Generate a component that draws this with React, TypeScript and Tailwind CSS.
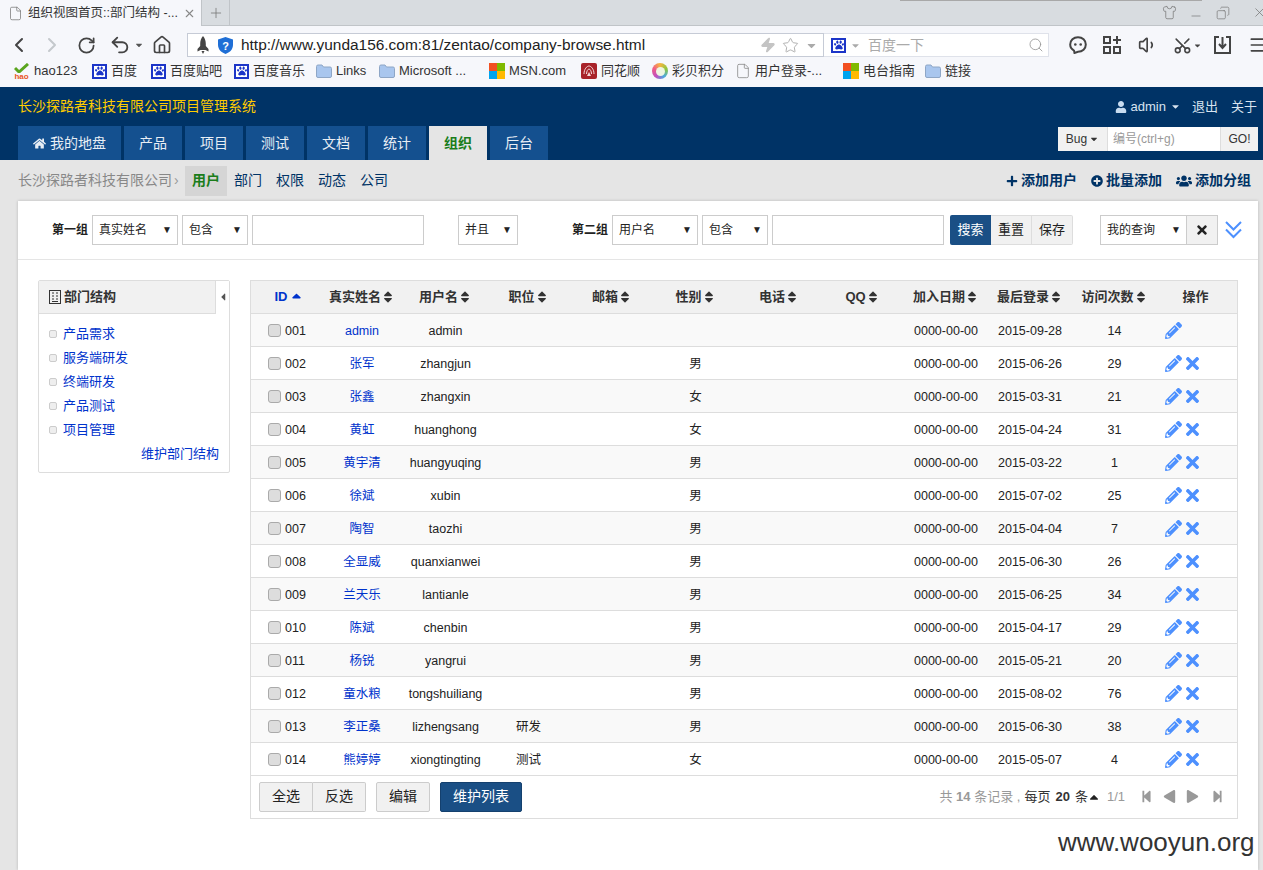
import {
  FaCaretDown,
  FaCaretLeft,
  FaCaretUp,
  FaHome,
  FaPaw,
  FaPencilAlt,
  FaPlus,
  FaPlusCircle,
  FaSort,
  FaSortUp,
  FaStepBackward,
  FaStepForward,
  FaTimes,
  FaUser,
  FaUsers,
  FaPlay,
} from "react-icons/fa";
import { ChevronLeft, ChevronRight, RotateCw, Undo2, Home, Zap, Star, Search, X, Plus, Minus, Copy, Shirt, Volume1, Scissors, Menu, File } from "lucide-react";

const Folder = () => (
  <svg width="16" height="14" viewBox="0 0 16 14" className="shrink-0">
    <path d="M0.5 2.5 Q0.5 1 2 1 H6 L7.5 3 H14 Q15.5 3 15.5 4.5 V12 Q15.5 13.5 14 13.5 H2 Q0.5 13.5 0.5 12 Z" fill="#a9c6ee" stroke="#8ea6c6" />
  </svg>
);

const Paw = () => (
  <span className="flex h-[15px] w-[15px] shrink-0 items-center justify-center border-2 border-[#1c35c8] bg-white text-[#1c35c8]">
    <FaPaw size={10} />
  </span>
);

const MsLogo = () => (
  <span className="grid h-[16px] w-[16px] shrink-0 grid-cols-2">
    <span className="bg-[#f25022]" />
    <span className="bg-[#7fba00]" />
    <span className="bg-[#00a4ef]" />
    <span className="bg-[#ffb900]" />
  </span>
);

const Hao = () => (
  <span className="flex h-[17px] w-[17px] shrink-0 flex-col items-center">
    <svg width="15" height="10" viewBox="0 0 15 10" className="shrink-0">
      <path d="M1 5 L5 9 L14 1" fill="none" stroke="#5aa51e" strokeWidth="3" />
    </svg>
    <span className="text-[8px] font-bold leading-[7px] text-[#e8541c]">hao</span>
  </span>
);

const Tonghuashun = () => (
  <svg width="16" height="16" viewBox="0 0 16 16" className="shrink-0">
    <rect width="16" height="16" rx="2" fill="#a8232a" />
    <path d="M3 11 C3 6 6 3 8 3 C10 3 13 6 13 11 M5.5 11 C5.5 8 7 6 8 6 C9 6 10.5 8 10.5 11" fill="none" stroke="#f3d9d9" strokeWidth="1" />
    <path d="M8 9 L10 13 H6 Z" fill="#f3d9d9" />
  </svg>
);

const Caibei = () => (
  <span className="flex h-[16px] w-[16px] shrink-0 items-center justify-center rounded-full bg-[conic-gradient(#f5b63f,#8cc63f,#4aa8e0,#c04fc0,#ef5a8a,#f5b63f)]">
    <span className="h-[9px] w-[9px] rounded-full bg-[#eef5e0]" />
  </span>
);

const bookmarks = [
  { w: "w-[79px]", label: "hao123", icon: <Hao /> },
  { w: "w-[59px]", label: "百度", icon: <Paw /> },
  { w: "w-[83px]", label: "百度贴吧", icon: <Paw /> },
  { w: "w-[82px]", label: "百度音乐", icon: <Paw /> },
  { w: "w-[63px]", label: "Links", icon: <Folder /> },
  { w: "w-[110px]", label: "Microsoft ...", icon: <Folder /> },
  { w: "w-[92px]", label: "MSN.com", icon: <MsLogo /> },
  { w: "w-[71px]", label: "同花顺", icon: <Tonghuashun /> },
  { w: "w-[83px]", label: "彩贝积分", icon: <Caibei /> },
  { w: "w-[108px]", label: "用户登录-...", icon: <File size={16} strokeWidth={1.2} color="#888" className="shrink-0" /> },
  { w: "w-[82px]", label: "电台指南", icon: <MsLogo /> },
  { w: "w-[60px]", label: "链接", icon: <Folder /> },
];

const BrowserChrome = () => (
  <div className="relative h-[87px] shrink-0 bg-[#f6f7fb] text-[#333]">
    <div className="absolute left-[900px] top-0 h-px w-[302px] bg-[#a8a8a8]" />
    {/* tab strip */}
    <div className="flex h-[26px] items-stretch border-b border-[#c0c4c8] bg-[#d8dce0]">
      <div className="-mb-px flex w-[202px] items-center border-r border-[#c0c4c8] bg-[#f6f7fb] pl-[8px] text-[12.5px]">
        <File size={15} strokeWidth={1.2} color="#777" className="shrink-0" />
        <span className="ml-[5px] w-[155px] shrink-0 whitespace-nowrap">组织视图首页::部门结构 -...</span>
        <X size={13} color="#888" className="shrink-0" />
      </div>
      <div className="flex w-[28px] items-center justify-center border-r border-[#c0c4c8]">
        <Plus size={16} strokeWidth={1.2} color="#777" />
      </div>
      <div className="ml-auto mr-[-4px] flex items-center gap-[12px] text-[#777]">
        <Shirt size={15} strokeWidth={1.2} />
        <Minus size={14} strokeWidth={1.2} className="mt-[7px]" />
        <Copy size={14} strokeWidth={1.2} className="ml-[1px] scale-x-[-1]" />
        <X size={15} strokeWidth={1.2} className="ml-[10px]" />
      </div>
    </div>
    {/* toolbar */}
    <div className="flex h-[34px] items-center pl-[7px] pt-[4px]">
      <ChevronLeft size={24} strokeWidth={2} color="#444" className="shrink-0" />
      <ChevronRight size={24} strokeWidth={2} color="#c4c8cc" className="ml-[9px] shrink-0" />
      <RotateCw size={19} strokeWidth={2.2} color="#444" className="ml-[13px] shrink-0" />
      <Undo2 size={22} strokeWidth={2} color="#444" className="ml-[13px] shrink-0" />
      <FaCaretDown size={10} color="#555" className="ml-[3px] shrink-0" />
      <Home size={20} strokeWidth={2} color="#444" className="ml-[8px] shrink-0" />
      <div className="ml-[15px] flex h-[24px] w-[637px] shrink-0 items-center border border-[#c6cbd6] bg-white pl-[8px]">
        <svg width="14" height="18" viewBox="0 0 14 18" className="shrink-0">
          <path d="M7 0 C9 2 9.8 5 9.8 8 V10 L12.5 13 V15.5 L9.5 14 H4.5 L1.5 15.5 V13 L4.2 10 V8 C4.2 5 5 2 7 0 Z M5.5 15 H8.5 L7 18 Z" fill="#444" />
        </svg>
        <svg width="15" height="17" viewBox="0 0 15 17" className="ml-[8px] shrink-0">
          <path d="M7.5 0 L15 2.5 V8 C15 12.5 11.5 15.5 7.5 17 C3.5 15.5 0 12.5 0 8 V2.5 Z" fill="#1f6fd6" />
          <text x="7.5" y="12.5" textAnchor="middle" fontSize="11" fontWeight="700" fill="#fff">?</text>
        </svg>
        <span className="ml-[8px] w-[519px] shrink-0 whitespace-nowrap text-[15.45px] leading-[22px] text-[#222]">http://www.yunda156.com:81/zentao/company-browse.html</span>
        <Zap size={16} fill="#c4c4c4" color="#c4c4c4" className="shrink-0" />
        <Star size={17} strokeWidth={1.3} color="#aaa" className="ml-[6px] shrink-0" />
        <FaCaretDown size={13} color="#aaa" className="ml-[6px] shrink-0" />
      </div>
      <div className="flex h-[24px] w-[225px] shrink-0 items-center border border-l-0 border-[#dfe2ea] bg-white pl-[7px]">
        <Paw />
        <FaCaretDown size={11} color="#aaa" className="ml-[4px]" />
        <span className="ml-[7px] text-[14px] text-[#aaa]">百度一下</span>
        <Search size={16} strokeWidth={1.3} color="#999" className="ml-auto mr-[4px]" />
      </div>
      <div className="ml-[20px] flex items-center gap-[15px] text-[#444]">
        <svg width="18" height="18" viewBox="0 0 18 18" className="shrink-0">
          <path d="M9 1.2 C13.5 1.2 16.8 4.4 16.8 8.6 C16.8 12.8 13.5 15.8 9 15.8 L5.5 17 L5 14.6 C2.7 13.3 1.2 11.2 1.2 8.6 C1.2 4.4 4.5 1.2 9 1.2 Z" fill="none" stroke="#444" strokeWidth="2" />
          <circle cx="6.3" cy="8.5" r="1.3" fill="#444" />
          <circle cx="11.7" cy="8.5" r="1.3" fill="#444" />
        </svg>
        <svg width="18" height="18" viewBox="0 0 18 18" className="ml-[1px] shrink-0" fill="none" stroke="#444" strokeWidth="2">
          <rect x="1" y="1" width="6" height="6" />
          <rect x="1" y="11" width="6" height="6" />
          <rect x="11" y="11" width="6" height="6" />
          <path d="M10 4 H18 M14 0 V8" />
        </svg>
        <Volume1 size={20} strokeWidth={2} className="ml-[2px] shrink-0" />
        <Scissors size={19} strokeWidth={2} className="shrink-0 -rotate-90" />
        <FaCaretDown size={9} className="-ml-[14px] shrink-0" />
        <svg width="17" height="18" viewBox="0 0 17 18" className="-ml-[3px] shrink-0" fill="none" stroke="#444" strokeWidth="2">
          <path d="M5 1 H1 V17 H16 V1 H12 M8.5 1 V11 M5 8 L8.5 12 L12 8" />
        </svg>
        <Menu size={20} strokeWidth={2} className="ml-[2px] shrink-0" />
      </div>
    </div>
    {/* favourites */}
    <div className="flex h-[27px] items-center pb-[5px] pl-[13px] text-[13px]">
      {bookmarks.map((b) => (
        <div key={b.label} className={`flex shrink-0 items-center gap-[4px] whitespace-nowrap ${b.w}`}>
          {b.icon}
          <span>{b.label}</span>
        </div>
      ))}
    </div>
  </div>
);

const navTabs = ["产品", "项目", "测试", "文档", "统计", "组织", "后台"];

const Header = () => (
  <div className="h-[73px] shrink-0 bg-[#003366]">
    <div className="flex h-[39px] items-center justify-between pl-[18px] pr-[6px]">
      <span className="text-[14px] text-[#ffcc00]">长沙探路者科技有限公司项目管理系统</span>
      <div className="flex items-center text-[13px] text-[#d8e4f0]">
        <FaUser size={12} className="text-[#c8dcf0]" />
        <span className="ml-[4px]">admin</span>
        <FaCaretDown size={11} className="ml-[4px]" />
        <span className="ml-[11px]">退出</span>
        <span className="ml-[13px]">关于</span>
      </div>
    </div>
    <div className="flex h-[34px] items-end justify-between pl-[18px] pr-[5px]">
      <div className="flex gap-[3px]">
        <div className="flex h-[34px] w-[103px] items-center justify-center gap-[4px] bg-[#14508f] text-[14px] text-[#e8eef5]">
          <FaHome size={13} />
          我的地盘
        </div>
        {navTabs.map((t) => (
          <div
            key={t}
            className={
              t === "组织"
                ? "flex h-[34px] w-[58px] items-center justify-center bg-[#e5e5e5] text-[14px] font-bold text-[#1a7d1a]"
                : "flex h-[34px] w-[58px] items-center justify-center bg-[#14508f] text-[14px] text-[#e8eef5]"
            }
          >
            {t}
          </div>
        ))}
      </div>
      <div className="mb-[9px] flex h-[24px] w-[200px] items-stretch bg-white text-[12px]">
        <div className="flex w-[49px] items-center justify-center gap-[2px] bg-[#f1f1f1] text-[#333]">
          Bug
          <FaCaretDown size={10} />
        </div>
        <div className="flex flex-1 items-center border-x border-[#ddd] pl-[5px] text-[#999]">编号(ctrl+g)</div>
        <div className="flex w-[37px] items-center justify-center bg-[#f1f1f1] text-[#333]">GO!</div>
      </div>
    </div>
  </div>
);

const SubNav = () => (
  <div className="flex h-[41px] shrink-0 items-center justify-between pl-[18px] pr-[12px] text-[14px]">
    <div className="flex items-center">
      <span className="text-[#888]">长沙探路者科技有限公司</span>
      <span className="ml-[2px] w-[11px] text-[#999]">›</span>
      <span className="flex h-[30px] w-[42px] items-center justify-center bg-[#d5d5d5] font-bold text-[#1a7d1a]">用户</span>
      <div className="ml-[7px] flex gap-[14px] text-[#003366]">
        <span>部门</span>
        <span>权限</span>
        <span>动态</span>
        <span>公司</span>
      </div>
    </div>
    <div className="flex items-center gap-[14px] text-[14px] font-bold text-[#003366]">
      <span className="flex items-center gap-[3px]"><FaPlus size={12} />添加用户</span>
      <span className="flex items-center gap-[3px]"><FaPlusCircle size={12} />批量添加</span>
      <span className="flex items-center gap-[3px]"><FaUsers size={16} />添加分组</span>
    </div>
  </div>
);

const Select = ({ w, label }: { w: string; label: string }) => (
  <div className={`flex h-[30px] shrink-0 items-center justify-between border border-[#ccc] bg-white pl-[6px] pr-[5px] text-[12px] text-[#222] ${w}`}>
    <span>{label}</span>
    <span className="text-[10px] leading-none">▼</span>
  </div>
);

const Input = () => <div className="h-[30px] w-[172px] shrink-0 border border-[#ccc] bg-white" />;

const SearchBar = () => (
  <div className="flex h-[59px] items-center border-b border-[#e5e5e5] pl-[34px] text-[12px]">
    <span className="w-[40px] shrink-0 font-bold text-[#222]">第一组</span>
    <Select w="w-[86px]" label="真实姓名" />
    <div className="ml-[4px]"><Select w="w-[66px]" label="包含" /></div>
    <div className="ml-[4px]"><Input /></div>
    <div className="ml-[34px]"><Select w="w-[60px]" label="并且" /></div>
    <span className="ml-[54px] w-[40px] shrink-0 font-bold text-[#222]">第二组</span>
    <Select w="w-[86px]" label="用户名" />
    <div className="ml-[4px]"><Select w="w-[66px]" label="包含" /></div>
    <div className="ml-[4px]"><Input /></div>
    <div className="ml-[6px] flex h-[30px] shrink-0 text-[13px]">
      <span className="flex w-[41px] items-center justify-center rounded-l-[2px] bg-[#1a4f85] text-white">搜索</span>
      <span className="flex w-[41px] items-center justify-center border border-l-0 border-[#ddd] bg-[#f1f1f1] text-[#222]">重置</span>
      <span className="flex w-[41px] items-center justify-center rounded-r-[2px] border border-l-0 border-[#ddd] bg-[#f1f1f1] text-[#222]">保存</span>
    </div>
    <div className="ml-[27px] flex shrink-0">
      <Select w="w-[87px]" label="我的查询" />
      <span className="flex h-[30px] w-[31px] items-center justify-center border border-l-0 border-[#ccc] bg-[#f1f1f1] text-[#222]"><FaTimes size={14} /></span>
    </div>
    <svg width="17" height="18" viewBox="0 0 17 18" className="ml-[7px] shrink-0" fill="none" stroke="#4d90fe" strokeWidth="2">
      <path d="M1 1 L8.5 8.5 L16 1 M1 8.5 L8.5 16 L16 8.5" />
    </svg>
  </div>
);

const depts = ["产品需求", "服务端研发", "终端研发", "产品测试", "项目管理"];

const Sidebar = () => (
  <div className="h-[193px] w-[192px] shrink-0 rounded-[2px] border border-[#ddd] text-[13px]">
    <div className="flex h-[33px] items-center justify-between border-b border-[#ddd] bg-[#f1f1f1] pl-[10px] font-bold text-[#333]">
      <span className="flex items-center gap-[3px]">
        <svg width="12" height="14" viewBox="0 0 12 14" className="shrink-0" fill="none" stroke="#333">
          <rect x="0.5" y="0.5" width="11" height="13" />
          <path d="M3 3 H5 M7 3 H9 M3 6 H5 M7 6 H9 M3 9 H5 M7 9 H9 M3 11.5 H9" />
        </svg>
        部门结构
      </span>
      <span className="flex h-[33px] w-[14px] items-center justify-center border-l border-[#ddd] bg-white text-[#555]"><FaCaretLeft size={12} /></span>
    </div>
    <div className="pt-[8px]">
      {depts.map((d) => (
        <div key={d} className="flex h-[24px] items-center pl-[10px] text-[#0033cc]">
          <span className="mr-[6px] h-[8px] w-[8px] shrink-0 rounded-[2px] border border-[#ccc] bg-[#eee]" />
          <span className="whitespace-nowrap">{d}</span>
        </div>
      ))}
      <div className="h-[24px] pr-[10px] text-right leading-[24px] text-[#0033cc]">维护部门结构</div>
    </div>
  </div>
);

const users = [
  ["001", "admin", "admin", "", "", "2015-09-28", "14"],
  ["002", "张军", "zhangjun", "", "男", "2015-06-26", "29"],
  ["003", "张鑫", "zhangxin", "", "女", "2015-03-31", "21"],
  ["004", "黄虹", "huanghong", "", "女", "2015-04-24", "31"],
  ["005", "黄宇清", "huangyuqing", "", "男", "2015-03-22", "1"],
  ["006", "徐斌", "xubin", "", "男", "2015-07-02", "25"],
  ["007", "陶智", "taozhi", "", "男", "2015-04-04", "7"],
  ["008", "全显威", "quanxianwei", "", "男", "2015-06-30", "26"],
  ["009", "兰天乐", "lantianle", "", "男", "2015-06-25", "34"],
  ["010", "陈斌", "chenbin", "", "男", "2015-04-17", "29"],
  ["011", "杨锐", "yangrui", "", "男", "2015-05-21", "20"],
  ["012", "童水粮", "tongshuiliang", "", "男", "2015-08-02", "76"],
  ["013", "李正桑", "lizhengsang", "研发", "男", "2015-06-30", "38"],
  ["014", "熊婷婷", "xiongtingting", "测试", "女", "2015-05-07", "4"],
];

const columns = ["真实姓名", "用户名", "职位", "邮箱", "性别", "电话", "QQ", "加入日期", "最后登录", "访问次数"];

const UserTable = () => (
  <div className="w-[988px] shrink-0 border border-[#ddd] text-[#222]">
    <table className="w-full table-fixed border-collapse text-center text-[12.5px]">
      <colgroup>
        <col className="w-[69px]" />
        <col className="w-[84px]" />
        <col className="w-[83px]" />
        <col className="w-[83px]" />
        <col className="w-[84px]" />
        <col className="w-[83px]" />
        <col className="w-[84px]" />
        <col className="w-[83px]" />
        <col className="w-[84px]" />
        <col className="w-[84px]" />
        <col className="w-[85px]" />
        <col />
      </colgroup>
      <thead>
        <tr className="h-[32px] border-b border-[#ddd] bg-[#f1f1f1] text-[13px] font-bold text-[#333]">
          <th className="text-[#0033cc]">
            <span className="inline-flex items-center gap-[1px] pl-[7px]">ID<FaSortUp size={15} className="mt-[5px]" /></span>
          </th>
          {columns.map((c) => (
            <th key={c}>
              <span className="inline-flex items-center">{c}<FaSort size={14} /></span>
            </th>
          ))}
          <th className="pr-[3px]">操作</th>
        </tr>
      </thead>
      <tbody>
        {users.map((u, i) => (
          <tr key={u[0]} className={i % 2 === 0 ? "h-[33px] border-b border-[#ddd] bg-[#f9f9f9] [&>td]:pt-[3px]" : "h-[33px] border-b border-[#ddd] bg-white [&>td]:pt-[3px]"}>
            <td className="pl-[17px] text-left">
              <span className="inline-flex items-center gap-[4px] align-middle">
                <span className="-mt-[2px] h-[13px] w-[13px] rounded-[3px] border border-[#aaa] bg-[#ddd]" />
                {u[0]}
              </span>
            </td>
            <td className="text-[#0033cc]">{u[1]}</td>
            <td>{u[2]}</td>
            <td>{u[3]}</td>
            <td />
            <td>{u[4]}</td>
            <td />
            <td />
            <td>0000-00-00</td>
            <td>{u[5]}</td>
            <td>{u[6]}</td>
            <td className="pl-[8px] text-left">
              <span className="-mt-[2px] inline-flex items-center gap-[1px] align-middle text-[#4d90fe]">
                <FaPencilAlt size={17} />
                {i > 0 && <FaTimes size={19} />}
              </span>
            </td>
          </tr>
        ))}
      </tbody>
    </table>
    <div className="flex h-[42px] items-center pl-[8px] pr-[13px] text-[13px]">
      <div className="flex h-[30px] text-[14px]">
        <span className="flex w-[54px] items-center justify-center rounded-l-[2px] border border-[#ccc] bg-[#f1f1f1]">全选</span>
        <span className="flex w-[53px] items-center justify-center rounded-r-[2px] border border-l-0 border-[#ccc] bg-[#f1f1f1]">反选</span>
      </div>
      <span className="ml-[10px] flex h-[30px] w-[54px] items-center justify-center rounded-[2px] border border-[#ccc] bg-[#f1f1f1] text-[14px]">编辑</span>
      <span className="ml-[10px] flex h-[30px] w-[82px] items-center justify-center rounded-[2px] border border-[#14406e] bg-[#1a4f85] text-[14px] text-white">维护列表</span>
      <div className="ml-auto flex items-center text-[#999]">
        <span>共 <b>14</b> 条记录 ,</span>
        <span className="ml-[4px] text-[#333]">每页<b className="mx-[5px]">20</b>条</span>
        <FaCaretUp size={14} className="-ml-[1px] text-[#222]" />
        <span className="ml-[6px]">1/1</span>
        <FaStepBackward size={13} className="ml-[15px]" />
        <FaPlay size={13} className="ml-[10px] rotate-180" />
        <FaPlay size={13} className="ml-[10px]" />
        <FaStepForward size={13} className="ml-[12px]" />
      </div>
    </div>
  </div>
);

export default function App() {
  return (
    <div className="relative flex h-[870px] flex-col overflow-hidden bg-[#e5e5e5] [font-family:'Liberation_Sans','Noto_Sans_CJK_SC',sans-serif]">
      <BrowserChrome />
      <Header />
      <SubNav />
      <div className="ml-[18px] mr-[5px] flex-1 bg-white shadow-[0_0_3px_rgba(0,0,0,0.2)]">
        <SearchBar />
        <div className="flex gap-[20px] pl-[20px] pt-[20px]">
          <Sidebar />
          <UserTable />
        </div>
      </div>
      <span className="absolute left-[1058px] top-[825px] text-[26px] leading-[34px] text-[#333]">www.wooyun.org</span>
    </div>
  );
}
